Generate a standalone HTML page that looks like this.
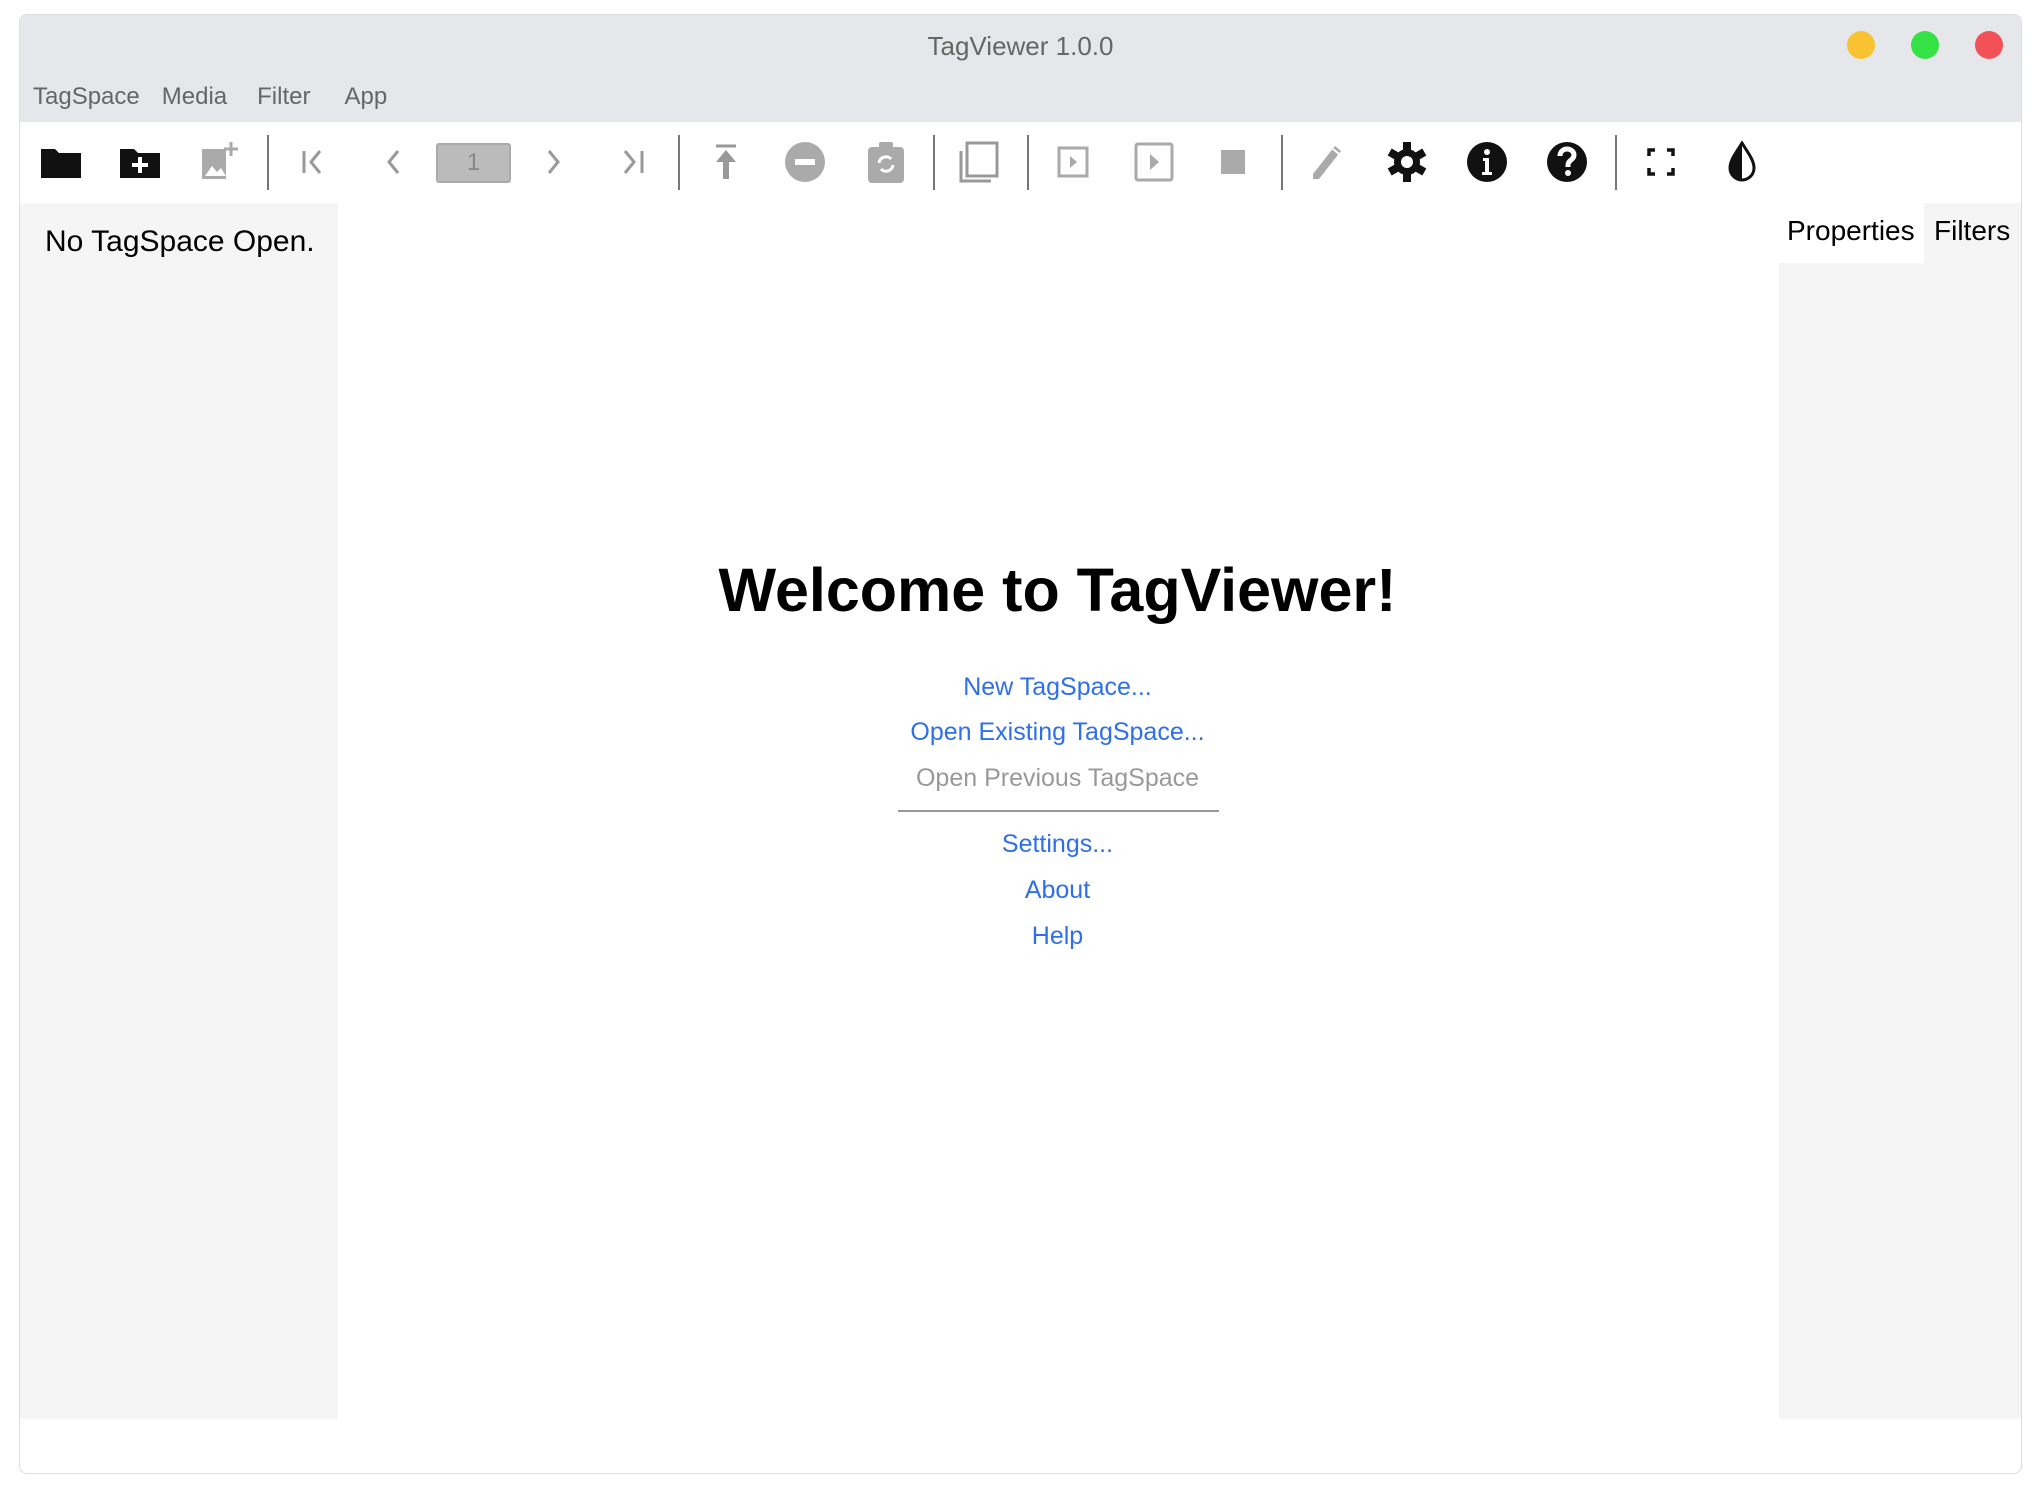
<!DOCTYPE html>
<html><head><meta charset="utf-8"><style>
*{margin:0;padding:0;box-sizing:border-box}
body{width:2040px;height:1492px;background:#fff;font-family:"Liberation Sans",sans-serif;position:relative;overflow:hidden}
.win{position:absolute;left:19px;top:14px;width:2003px;height:1460px;border:1px solid #ddd;border-radius:8px;overflow:hidden;background:#fff}
.a{position:absolute}
.tb{left:0;top:0;width:100%;height:107px;background:#e6e7ea}
.ic{position:absolute;top:126px;width:42px;height:42px}
.sep{position:absolute;top:120px;width:2px;height:55px;background:#777}
.lk{position:absolute;left:0;width:2003px;text-align:center;font-size:25px;color:#2f6fe8;line-height:32px;padding-left:72px}
</style></head><body>
<div class="win">
<div class="a tb"></div>
<div class="a" style="left:0;width:100%;top:16px;text-align:center;font-size:26px;color:#666">TagViewer 1.0.0</div>
<div class="a" style="left:1827px;top:16px;width:28px;height:28px;border-radius:50%;background:#f8c231"></div>
<div class="a" style="left:1891px;top:16px;width:28px;height:28px;border-radius:50%;background:#35e245"></div>
<div class="a" style="left:1955px;top:16px;width:28px;height:28px;border-radius:50%;background:#f25158"></div>
<div class="a" style="left:13px;top:68px;font-size:24px;color:#666"><span>TagSpace</span><span style="margin-left:22px">Media</span><span style="margin-left:30px">Filter</span><span style="margin-left:34px">App</span></div>

<svg class="ic" style="left:20px" viewBox="0 0 42 42"><path d="M1 8h14l4 4h22v25H1z" fill="#111"/></svg>
<svg class="ic" style="left:99px" viewBox="0 0 42 42"><path d="M1 8h14l4 4h22v25H1z" fill="#111"/><path d="M21 16v16M13 24h16" stroke="#fff" stroke-width="4"/></svg>
<svg class="ic" style="left:179px" viewBox="0 0 42 42"><path d="M3 8h24v30H3z" fill="#aaa"/><path d="M6 35l7-10 5 6 4-4 5 8z" fill="#fff"/><path d="M32 1v14M25 8h14" stroke="#aaa" stroke-width="3"/></svg>
<div class="sep" style="left:247px"></div>
<svg class="ic" style="left:274px" viewBox="0 0 42 42"><path d="M10 10v22M26 10l-9 11 9 11" stroke="#999" stroke-width="3" fill="none"/></svg>
<svg class="ic" style="left:353px" viewBox="0 0 42 42"><path d="M25 10l-9 11 9 11" stroke="#999" stroke-width="3" fill="none"/></svg>
<div class="a" style="left:416px;top:128px;width:75px;height:40px;background:#bbb;border:2px solid #aaa;border-radius:3px;text-align:center;font-size:24px;line-height:36px;color:#888">1</div>
<svg class="ic" style="left:512px" viewBox="0 0 42 42"><path d="M17 10l9 11-9 11" stroke="#999" stroke-width="3" fill="none"/></svg>
<svg class="ic" style="left:591px" viewBox="0 0 42 42"><path d="M14 10l9 11-9 11M31 10v22" stroke="#999" stroke-width="3" fill="none"/></svg>
<div class="sep" style="left:658px"></div>
<svg class="ic" style="left:685px" viewBox="0 0 42 42"><path d="M11 5h20" stroke="#999" stroke-width="3"/><path d="M21 9l-10 12h7v17h6V21h7z" fill="#999"/></svg>
<svg class="ic" style="left:764px" viewBox="0 0 42 42"><circle cx="21" cy="21" r="20" fill="#aaa"/><rect x="11" y="18" width="20" height="6" fill="#fff"/></svg>
<svg class="ic" style="left:845px" viewBox="0 0 42 42"><rect x="3" y="6" width="36" height="36" rx="4" fill="#aaa"/><rect x="14" y="1" width="14" height="7" rx="2" fill="#aaa"/><path d="M14 22a7 7 0 0112-4M28 24a7 7 0 01-12 4" stroke="#fff" stroke-width="3" fill="none"/></svg>
<div class="sep" style="left:913px"></div>
<svg class="ic" style="left:938px" viewBox="0 0 42 42"><rect x="9" y="2" width="30" height="33" stroke="#999" stroke-width="3" fill="none"/><path d="M3 10v30h30" stroke="#999" stroke-width="3" fill="none"/></svg>
<div class="sep" style="left:1007px"></div>
<svg class="ic" style="left:1032px" viewBox="0 0 42 42"><rect x="7" y="7" width="28" height="28" stroke="#aaa" stroke-width="3" fill="none"/><path d="M18 15l7 6-7 6z" fill="#aaa"/></svg>
<svg class="ic" style="left:1113px" viewBox="0 0 42 42"><rect x="3" y="3" width="36" height="36" rx="2" stroke="#aaa" stroke-width="3" fill="none"/><path d="M17 13l9 8-9 8z" fill="#aaa"/></svg>
<svg class="ic" style="left:1192px" viewBox="0 0 42 42"><rect x="9" y="9" width="24" height="24" fill="#aaa"/></svg>
<div class="sep" style="left:1261px"></div>
<svg class="ic" style="left:1286px" viewBox="0 0 42 42"><path d="M7 33l22-28 6 5-22 28H7z" fill="#aaa"/><path d="M27 8l6 5" stroke="#fff" stroke-width="2"/></svg>
<svg class="ic" style="left:1366px" viewBox="0 0 42 42"><g fill="#111"><circle cx="21" cy="21" r="13"/><rect x="17" y="1" width="8" height="40"/><rect x="17" y="1" width="8" height="40" transform="rotate(60 21 21)"/><rect x="17" y="1" width="8" height="40" transform="rotate(120 21 21)"/></g><circle cx="21" cy="21" r="6" fill="#fff"/></svg>
<svg class="ic" style="left:1446px" viewBox="0 0 42 42"><ellipse cx="21" cy="21" rx="20" ry="20" fill="#111"/><circle cx="21" cy="11" r="3" fill="#fff"/><path d="M17 17h6v14h3v3H16v-3h3V20h-2z" fill="#fff"/></svg>
<svg class="ic" style="left:1526px" viewBox="0 0 42 42"><circle cx="21" cy="21" r="20" fill="#111"/><path d="M14 15c0-5 4-7 7-7s7 2 7 6c0 5-6 5-6 10v2" stroke="#fff" stroke-width="5" fill="none"/><circle cx="22" cy="32" r="3" fill="#fff"/></svg>
<div class="sep" style="left:1595px"></div>
<svg class="ic" style="left:1620px" viewBox="0 0 42 42"><path d="M9 15V9h6M27 9h6v6M33 27v6h-6M15 33H9v-6" stroke="#111" stroke-width="3.5" fill="none"/></svg>
<svg class="ic" style="left:1701px" viewBox="0 0 42 42"><path d="M21 2C15 12 9 19 9 27a12 12 0 0024 0c0-8-6-15-12-25z" stroke="#111" stroke-width="3" fill="none"/><path d="M21 2C15 12 9 19 9 27a12 12 0 0012 12z" fill="#111"/></svg>

<div class="a" style="left:0;top:188px;width:318px;height:1216px;background:#f5f5f5"></div>
<div class="a" style="left:25px;top:210px;font-size:30px;color:#000">No TagSpace Open.</div>
<div class="a" style="left:1759px;top:248px;width:244px;height:1156px;background:#f5f5f5"></div>
<div class="a" style="left:1904px;top:188px;width:99px;height:60px;background:#f5f5f5"></div>
<div class="a" style="left:1767px;top:200px;font-size:28px;color:#000">Properties</div>
<div class="a" style="left:1914px;top:200px;font-size:28px;color:#000">Filters</div>

<div class="a" style="left:0;width:2003px;top:540px;text-align:center;font-size:61px;font-weight:bold;color:#000;padding-left:72px">Welcome to TagViewer!</div>
<div class="lk" style="top:656px">New TagSpace...</div>
<div class="lk" style="top:701px">Open Existing TagSpace...</div>
<div class="lk" style="top:747px;color:#999">Open Previous TagSpace</div>
<div class="a" style="left:878px;top:795px;width:321px;height:2px;background:#999"></div>
<div class="lk" style="top:813px">Settings...</div>
<div class="lk" style="top:859px">About</div>
<div class="lk" style="top:905px">Help</div>
</div>
</body></html>
